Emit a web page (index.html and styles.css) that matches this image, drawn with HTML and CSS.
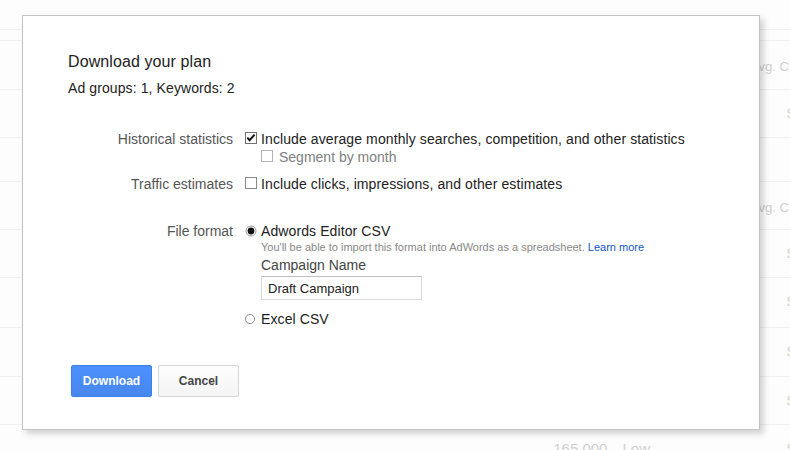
FILE: index.html
```html
<!DOCTYPE html>
<html>
<head>
<meta charset="utf-8">
<link rel="stylesheet" href="styles.css">
</head>
<body>
<div class="page">
  <div class="bgrow h30"></div>
  <div class="bgrow h11"></div>
  <div class="bgrow h49"><span class="bgcell t-mid">Avg. C</span></div>
  <div class="bgrow h48"><span class="bgcell t-top">$</span></div>
  <div class="bgrow h44"></div>
  <div class="bgrow h48"><span class="bgcell t-mid">Avg. C</span></div>
  <div class="bgrow h48"><span class="bgcell t-top">$</span></div>
  <div class="bgrow h50"><span class="bgcell t-top">$</span></div>
  <div class="bgrow h49"><span class="bgcell t-top">$</span></div>
  <div class="bgrow h48"><span class="bgcell t-top">$</span></div>
  <div class="bgrow last"><span class="bgnum">165,000</span><span class="bglow">Low</span><span class="bgcell t-top">$</span></div>
</div>

<div class="dialog">
  <h1 class="title">Download your plan</h1>
  <div class="subtitle">Ad groups: 1, Keywords: 2</div>

  <div class="form">
    <div class="row">
      <div class="label">Historical statistics</div>
      <div class="field">
        <div class="opt">
          <svg class="box" viewBox="0 0 12 12" width="12" height="12"><rect x="0.5" y="0.5" width="11" height="11" fill="#fff" stroke="#6f6f6f"/><path d="M2.3 5.6 L4.6 8.2 L9.6 2.6" fill="none" stroke="#111" stroke-width="2"/></svg>
          <span>Include average monthly searches, competition, and other statistics</span>
        </div>
        <div class="opt indent disabled">
          <svg class="box seg" viewBox="0 0 12 12" width="12" height="12"><rect x="0.5" y="0.5" width="11" height="11" fill="#fff" stroke="#b4b4b4"/></svg>
          <span>Segment by month</span>
        </div>
      </div>
    </div>

    <div class="row gap-s">
      <div class="label">Traffic estimates</div>
      <div class="field">
        <div class="opt">
          <svg class="box" viewBox="0 0 12 12" width="12" height="12"><rect x="0.5" y="0.5" width="11" height="11" fill="#fff" stroke="#8a8a8a"/></svg>
          <span>Include clicks, impressions, and other estimates</span>
        </div>
      </div>
    </div>

    <div class="row gap-l">
      <div class="label">File format</div>
      <div class="field">
        <div class="opt">
          <svg class="radio" viewBox="0 0 12 12" width="12" height="12"><circle cx="6" cy="6" r="5" fill="#fff" stroke="#9a9a9a"/><circle cx="6" cy="6" r="3.4" fill="#111"/></svg>
          <span>Adwords Editor CSV</span>
        </div>
        <div class="indent">
          <div class="hint">You'll be able to import this format into AdWords as a spreadsheet. <a class="link" href="#">Learn more</a></div>
          <div class="cname">Campaign Name</div>
          <div class="input">Draft Campaign</div>
        </div>
        <div class="opt excel">
          <svg class="radio" viewBox="0 0 12 12" width="12" height="12"><circle cx="6" cy="6" r="4.6" fill="#fff" stroke="#8f8f8f"/></svg>
          <span>Excel CSV</span>
        </div>
      </div>
    </div>
  </div>

  <div class="actions">
    <button class="btn primary">Download</button>
    <button class="btn">Cancel</button>
  </div>
</div>
</body>
</html>
```

FILE: styles.css
```css
html, body {
  margin: 0;
  padding: 0;
}
body {
  width: 790px;
  height: 450px;
  overflow: hidden;
  position: relative;
  background: #fdfdfd;
  font-family: "Liberation Sans", Arial, sans-serif;
  color: #222;
}

/* faint background page */
.page {
  width: 790px;
}
.bgrow {
  box-sizing: border-box;
  border-bottom: 1px solid #f0f0f0;
  display: flex;
  justify-content: flex-end;
  font-size: 13px;
  color: #cfcfcf;
}
.h30 { height: 30px; }
.h11 { height: 11px; }
.h49 { height: 49px; }
.h48 { height: 48px; }
.h44 { height: 44px; }
.h50 { height: 50px; }
.last { height: 30px; border-bottom: 0; }
.bgcell {
  white-space: nowrap;
  overflow: hidden;
  line-height: 16px;
}
.t-mid { padding-top: 18px; width: 40px; }
.t-top { padding-top: 16px; width: 3px; }
.bgnum {
  margin-right: 15px;
  padding-top: 16px;
  line-height: 16px;
  font-size: 15px;
}
.bglow {
  margin-right: 137px;
  padding-top: 16px;
  line-height: 16px;
  font-size: 15px;
}

/* dialog */
.dialog {
  position: absolute;
  left: 22px;
  top: 15px;
  width: 738px;
  height: 415px;
  box-sizing: border-box;
  border: 1px solid #c4c4c4;
  background: #fff;
  box-shadow: 4px 4px 6px rgba(0, 0, 0, 0.17);
  padding: 36px 0 0 45px;
}
.title {
  margin: 0;
  font-size: 16px;
  font-weight: normal;
  line-height: 20px;
  color: #222;
  letter-spacing: 0.1px;
}
.subtitle {
  margin-top: 8px;
  font-size: 14px;
  line-height: 16px;
  color: #222;
  letter-spacing: 0.1px;
}
.form {
  margin-top: 34px;
  font-size: 14px;
}
.row {
  display: grid;
  grid-template-columns: 165px 1fr;
  column-gap: 12px;
}
.gap-s { margin-top: 9px; }
.gap-l { margin-top: 29px; }
.label {
  text-align: right;
  line-height: 18px;
  color: #555;
}
.field {
  line-height: 18px;
}
.opt {
  display: flex;
  align-items: flex-start;
  line-height: 18px;
  color: #222;
  letter-spacing: 0.1px;
}
.box {
  flex: none;
  margin-top: 2px;
  margin-right: 4px;
  width: 12px;
  height: 12px;
}
.box.seg {
  margin-right: 6px;
}
.radio {
  flex: none;
  margin-top: 3px;
  margin-right: 4px;
  width: 12px;
  height: 12px;
}
.indent {
  padding-left: 16px;
}
.disabled {
  color: #808080;
  letter-spacing: 0;
}
.hint {
  font-size: 11px;
  line-height: 14px;
  color: #888;
  letter-spacing: 0;
}
.link {
  color: #1155cc;
  text-decoration: none;
}
.cname {
  margin-top: 2px;
  line-height: 18px;
  color: #444;
}
.input {
  margin-top: 2px;
  width: 161px;
  height: 24px;
  box-sizing: border-box;
  border: 1px solid #d9d9d9;
  border-top-color: #c0c0c0;
  padding: 3px 6px 1px;
  font-size: 13px;
  line-height: 18px;
  color: #222;
}
.excel {
  margin-top: 10px;
}
.excel .radio {
  margin-left: -1px;
  margin-right: 5px;
}
.actions {
  margin-top: 37px;
  margin-left: 3px;
  display: flex;
  gap: 6px;
}
.btn {
  width: 81px;
  height: 32px;
  box-sizing: border-box;
  border: 1px solid #d6d6d6;
  border-radius: 2px;
  background: linear-gradient(#fdfdfd, #f4f4f4);
  font-family: "Liberation Sans", Arial, sans-serif;
  font-size: 12px;
  font-weight: bold;
  color: #444;
  padding: 0;
}
.btn.primary {
  border-color: #3a82f0;
  background: linear-gradient(#4d90fe, #4787ed);
  color: #fff;
}
```
